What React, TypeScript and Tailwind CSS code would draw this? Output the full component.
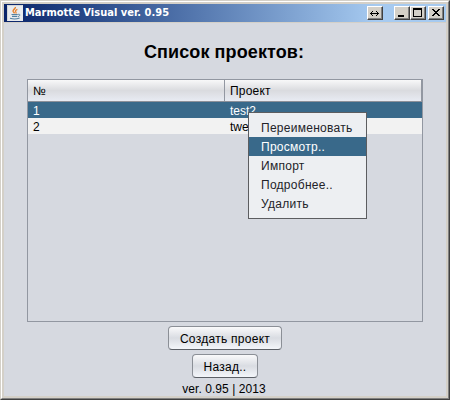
import React from "react";

const menuItems = ["Переименовать", "Просмотр..", "Импорт", "Подробнее..", "Удалить"];

function JavaIcon() {
  return (
    <svg width="16" height="16" viewBox="0 0 16 16" className="shrink-0">
      <rect width="16" height="16" fill="#e9ebee" />
      <path d="M0.5 15.5V0.5H15.5" fill="none" stroke="#d4d5d6" />
      <path d="M8.4 2C8.8 3.6 5.8 4.6 6.1 6.2c.2.9 1.2 1.3 1.4 2.2" fill="none" stroke="#e8822c" strokeWidth="1.5" />
      <path d="M10.4 4.4C8.6 5.1 8 6 8.9 7c.4.5.3 1-.2 1.5" fill="none" stroke="#e8822c" strokeWidth="1.2" />
      <path d="M4.5 9.5h6.2M5 11.4h5.3M3 13.3c2.5.8 7 .8 9.6-.2" fill="none" stroke="#5382a1" strokeWidth="1.1" />
      <path d="M10.8 9.5c2.6-.8 2.9 1.2.2 2.1" fill="none" stroke="#5382a1" />
    </svg>
  );
}

function FrameButton({ children }: { children: React.ReactNode }) {
  return (
    <div className="h-[14px] w-4 shrink-0 border border-t-white border-l-white border-r-[#404040] border-b-[#404040] bg-[#d4d0c8]">
      <svg width="14" height="12" viewBox="0 0 14 12" shapeRendering="crispEdges" className="block">
        <path d="M13.5 0V11.5H0" fill="none" stroke="#808080" />
        {children}
      </svg>
    </div>
  );
}

function PushButton({ label, className }: { label: string; className: string }) {
  return (
    <button
      className={`flex h-6 items-center justify-center rounded-[4px] border border-[#8b8f96] border-b-[#5c6067] bg-linear-to-b from-[#fafafb] via-[#d9dce2] to-[#f4f6fa] pt-px text-[12px] leading-[14px] tracking-[0.27px] whitespace-nowrap ${className}`}
    >
      {label}
    </button>
  );
}

export default function App() {
  return (
    <div className="relative flex h-[400px] w-[450px] flex-col border border-t-[#d4d0c8] border-l-[#d4d0c8] border-r-[#404040] border-b-[#404040] bg-[#d4d0c8] font-['Liberation_Sans',sans-serif] text-[12px] text-black">
      <div className="flex min-h-0 flex-1 flex-col border border-t-white border-l-white border-r-[#808080] border-b-[#808080] p-[2px]">
        <header className="flex h-[18px] shrink-0 items-center bg-linear-to-r from-[#0a246a] to-[#a6caf0] to-[84%] pr-[2px] pl-[3px]">
          <JavaIcon />
          <span className="ml-[2px] flex-1 font-['DejaVu_Sans_Condensed','DejaVu_Sans',sans-serif] text-[11px] leading-[18px] font-bold [font-stretch:condensed] tracking-[0.02px] whitespace-nowrap text-white">
            Marmotte Visual ver. 0.95
          </span>
          <FrameButton>
            <path d="M2 6h9v1H2zM3 5h1v3H3zM4 4h1v1H4zM4 8h1v1H4zM9 5h1v3H9zM8 4h1v1H8zM8 8h1v1H8z" />
          </FrameButton>
          <div className="ml-[11px] flex">
            <FrameButton>
              <path d="M3 8h6v2H3z" />
            </FrameButton>
            <FrameButton>
              <path d="M2 1h9v9H2zM3 3v6h7V3z" fillRule="evenodd" />
            </FrameButton>
          </div>
          <div className="ml-[2px] flex">
            <FrameButton>
              <path d="M3 2h2v1h1v1h2V3h1V2h2v1h-1v1H9v1H8v1h1v1h1v1h1v1H9V8H8V7H6v1H5v1H3V8h1V7h1V6h1V5H5V4H4V3H3z" />
            </FrameButton>
          </div>
        </header>

        <main className="mt-px flex min-h-0 flex-1 flex-col items-center bg-[#d6d9e0]">
          <h1 className="mt-[18px] h-[22px] pr-[2px] text-[18px] leading-[22px] font-bold tracking-[0.1px] whitespace-nowrap">Список проектов:</h1>
          <section className="mt-4 flex h-[243px] w-[396px] shrink-0 flex-col border border-[#9297a1]">
            <div className="flex h-[22px] shrink-0 border-b border-[#8c9099] bg-linear-to-b from-[#f8f8f9] via-[#dadbdf] to-[#e8ebf3] leading-[22px] tracking-[0.2px]">
              <div className="w-[197px] border-r border-[#9297a1] pl-[5px]">№</div>
              <div className="flex-1 border-r border-[#9297a1] pl-[5px]">Проект</div>
            </div>
            <div className="flex h-4 shrink-0 bg-[#39698a] leading-[18px] text-white">
              <div className="w-[197px] pl-[5px]">1</div>
              <div className="flex-1 pl-[5px]">test2</div>
            </div>
            <div className="flex h-4 shrink-0 bg-[#f2f2f2] leading-[18px]">
              <div className="w-[197px] pl-[5px]">2</div>
              <div className="flex-1 pl-[5px]">twer</div>
            </div>
          </section>
          <PushButton label="Создать проект" className="mt-[4px] w-[114px]" />
          <PushButton label="Назад.." className="mt-[4px] w-[66px]" />
          <footer className="mt-[3px] h-[15px] pr-[2px] leading-[16px] tracking-[0.06px] whitespace-nowrap">ver. 0.95 | 2013</footer>
        </main>
      </div>

      <ul className="absolute top-[111px] left-[247px] h-[107px] w-[119px] border border-[#5c5d60] bg-[#edeff2] py-[5px] tracking-[0.27px] text-[#232329]">
        {menuItems.map((item, i) => (
          <li key={item} className={`h-[19px] pl-3 leading-[20px] whitespace-nowrap ${i === 1 ? "bg-[#39698a] text-white" : ""}`}>
            {item}
          </li>
        ))}
      </ul>
    </div>
  );
}
